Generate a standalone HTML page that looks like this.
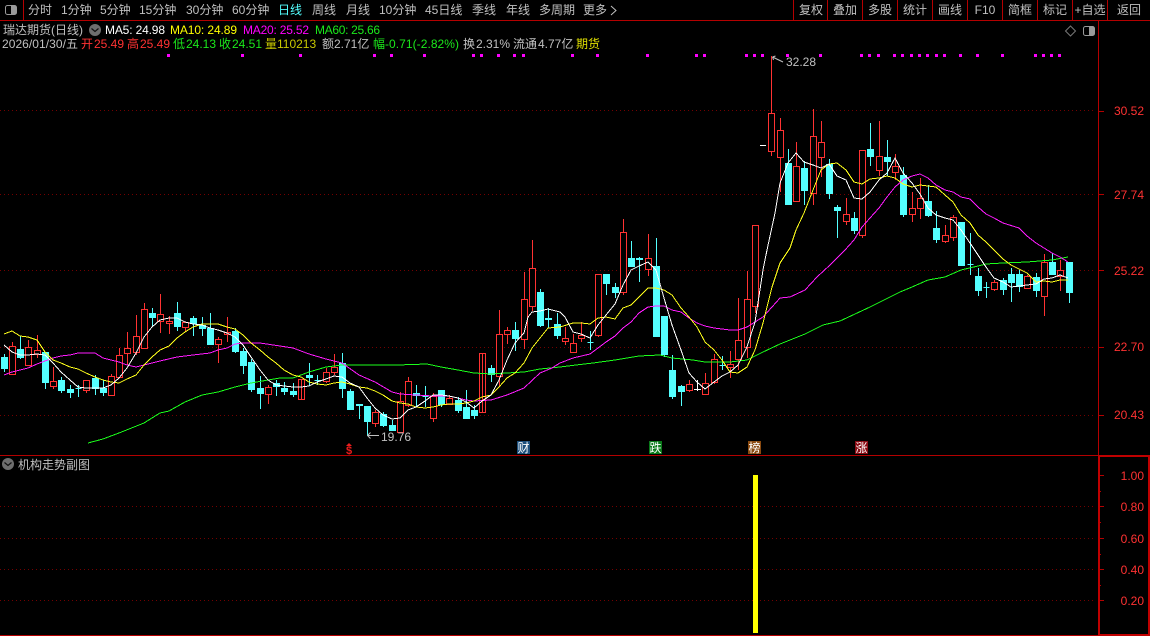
<!DOCTYPE html>
<html><head><meta charset="utf-8"><style>
html,body{margin:0;padding:0;background:#000;width:1150px;height:636px;overflow:hidden}
svg{display:block}
text{font-family:"Liberation Sans","WenQuanYi Zen Hei","Noto Sans CJK SC",sans-serif;font-size:12px;fill:#c0c0c0}
.r{fill:#ff3232}.g{fill:#1be81b}.y{fill:#c8c800}
.a{fill:#ff3232;text-anchor:end}.m{text-anchor:middle}
</style></head><body>
<svg width="1150" height="636" viewBox="0 0 1150 636" xmlns="http://www.w3.org/2000/svg">
<rect width="1150" height="636" fill="#000"/>
<!-- grid -->
<g stroke="#740000" stroke-width="1" stroke-dasharray="1 3" shape-rendering="crispEdges">
<path d="M0 110.500H1094M0 194.500H1094M0 270.500H1094M0 347.500H1094M0 415.500H1094M0 506.500H1094M0 538.500H1094M0 569.500H1094M0 600.500H1094"/>
</g>
<!-- frame -->
<g stroke="#b40000" stroke-width="1" fill="none" shape-rendering="crispEdges">
<path d="M0 20.500H1150M0 455.500H1098M23.500 0V20M793.500 0V20M827.500 0V20M862.500 0V20M897.500 0V20M932.500 0V20M967.500 0V20M1002.500 0V20M1037.500 0V20M1072.500 0V20M1107.500 0V20M1098.500 20V455M0 635.500H1098"/>
<path d="M1098 111.500H1104M1098 194.500H1104M1098 270.500H1104M1098 347.500H1104M1098 415.500H1104M1098 475.500H1104M1098 506.500H1104M1098 538.500H1104M1098 569.500H1104M1098 600.500H1104M1098 491.500H1101M1098 522.500H1101M1098 554.500H1101M1098 585.500H1101"/>
<rect x="1099" y="456" width="50" height="179" stroke-width="2" stroke="#c00000"/>
</g>
<!-- toolbar icon -->
<rect x="5.500" y="5.500" width="11" height="9" rx="2" fill="#000" stroke="#9a9a9a"/><rect x="11" y="6" width="5" height="8" fill="#9a9a9a"/>
<!-- toolbar -->
<text x="28" y="14">分时</text><text x="61" y="14">1分钟</text><text x="100" y="14">5分钟</text><text x="139" y="14">15分钟</text><text x="186" y="14">30分钟</text><text x="232" y="14">60分钟</text>
<text x="278" y="14" style="fill:#54ffff">日线</text><text x="312" y="14">周线</text><text x="346" y="14">月线</text><text x="379" y="14">10分钟</text><text x="425" y="14">45日线</text><text x="472" y="14">季线</text><text x="506" y="14">年线</text><text x="539" y="14">多周期</text><text x="583" y="14">更多</text>
<path d="M611 6l5 4.500l-5 4.500" fill="none" stroke="#c0c0c0"/>
<text class="m" x="811" y="14">复权</text><text class="m" x="845" y="14">叠加</text><text class="m" x="880" y="14">多股</text><text class="m" x="915" y="14">统计</text><text class="m" x="950" y="14">画线</text><text class="m" x="985" y="14">F10</text><text class="m" x="1020" y="14">简框</text><text class="m" x="1055" y="14">标记</text><text class="m" x="1090" y="14">+自选</text><text class="m" x="1129" y="14">返回</text>
<!-- info -->
<text x="3" y="34">瑞达期货(日线)</text>
<circle cx="95" cy="30" r="6" fill="#6e6e6e"/><path d="M91.500 28.500l3.500 3l3.500-3" fill="none" stroke="#111" stroke-width="1.200"/>
<text x="105" y="34" style="fill:#fff" textLength="60">MA5: 24.98</text><text x="170" y="34" style="fill:#ff0" textLength="67">MA10: 24.89</text><text x="243" y="34" style="fill:#f0f" textLength="66">MA20: 25.52</text><text x="315" y="34" style="fill:#1be81b" textLength="65">MA60: 25.66</text>
<text x="2" y="48" textLength="76">2026/01/30/五</text>
<text class="r" x="81" y="48">开</text><text class="r" x="94" y="48">25.49</text><text class="r" x="127" y="48">高</text><text class="r" x="140" y="48">25.49</text>
<text class="g" x="173" y="48">低</text><text class="g" x="186" y="48">24.13</text><text class="g" x="219" y="48">收</text><text class="g" x="232" y="48">24.51</text>
<text class="y" x="265" y="48">量</text><text class="y" x="277" y="48">110213</text>
<text x="322" y="48">额</text><text x="334" y="48">2.71亿</text>
<text class="g" x="373" y="48">幅</text><text class="g" x="385" y="48" textLength="74">-0.71(-2.82%)</text>
<text x="463" y="48">换</text><text x="476" y="48">2.31%</text><text x="513" y="48">流通</text><text x="538" y="48">4.77亿</text><text x="576" y="48" style="fill:#e0e000">期货</text>
<!-- top right icons -->
<path d="M1070.500 26l5 5l-5 5l-5-5z" fill="none" stroke="#777"/>
<rect x="1083.500" y="26.500" width="11" height="9" rx="2" fill="#000" stroke="#9a9a9a"/><rect x="1089" y="27" width="5" height="8" fill="#9a9a9a"/>
<!-- dots -->
<path fill="#f0f" shape-rendering="crispEdges" d="M167 54h3v3h-3zM241 54h3v3h-3zM299 54h3v3h-3zM373 54h3v3h-3zM390 54h3v3h-3zM423 54h3v3h-3zM472 54h3v3h-3zM480 54h3v3h-3zM497 54h3v3h-3zM513 54h3v3h-3zM522 54h3v3h-3zM571 54h3v3h-3zM596 54h3v3h-3zM646 54h3v3h-3zM695 54h3v3h-3zM703 54h3v3h-3zM745 54h3v3h-3zM753 54h3v3h-3zM761 54h3v3h-3zM786 54h3v3h-3zM819 54h3v3h-3zM860 54h3v3h-3zM868 54h3v3h-3zM877 54h3v3h-3zM893 54h3v3h-3zM901 54h3v3h-3zM910 54h3v3h-3zM918 54h3v3h-3zM926 54h3v3h-3zM935 54h3v3h-3zM943 54h3v3h-3zM959 54h3v3h-3zM976 54h3v3h-3zM1001 54h3v3h-3zM1034 54h3v3h-3zM1042 54h3v3h-3zM1050 54h3v3h-3zM1058 54h3v3h-3z"/>
<!-- cyan candles -->
<path fill="#54ffff" stroke="#54ffff" stroke-width="1" shape-rendering="crispEdges" d="M4.500 354V372M1.500 357.500h6V368.500h-6zM20.500 336V359M17.500 349.500h6V357.500h-6zM45.500 352V389M42.500 352.500h6V382.500h-6zM61.500 377V393M58.500 380.500h6V390.500h-6zM70.500 385V398M67.500 389.500h6V392.500h-6zM78.500 385V397M75.500 388.500h6V388.500h-6zM95.500 375V395M92.500 378.500h6V388.500h-6zM103.500 380V396M100.500 388.500h6V392.500h-6zM152.500 308V327M149.500 313.500h6V317.500h-6zM177.500 302V331M174.500 313.500h6V326.500h-6zM193.500 316V336M190.500 318.500h6V323.500h-6zM202.500 317V336M199.500 325.500h6V328.500h-6zM210.500 313V344M207.500 328.500h6V344.500h-6zM235.500 328V353M232.500 331.500h6V351.500h-6zM243.500 348V374M240.500 351.500h6V365.500h-6zM251.500 359V392M248.500 362.500h6V389.500h-6zM260.500 376V409M257.500 388.500h6V393.500h-6zM276.500 380V396M273.500 383.500h6V386.500h-6zM284.500 382V395M281.500 388.500h6V391.500h-6zM293.500 383V397M290.500 391.500h6V394.500h-6zM309.500 363V386M306.500 375.500h6V377.500h-6zM317.500 375V385M314.500 380.500h6V380.500h-6zM342.500 353V398M339.500 363.500h6V388.500h-6zM350.500 389V409M347.500 391.500h6V409.500h-6zM359.500 404V419M356.500 404.500h6V405.500h-6zM367.500 406V436M364.500 406.500h6V421.500h-6zM383.500 412V427M380.500 414.500h6V425.500h-6zM392.500 420V431M389.500 425.500h6V430.500h-6zM416.500 385V407M413.500 393.500h6V395.500h-6zM425.500 386V407M422.500 396.500h6V396.500h-6zM441.500 390V407M438.500 390.500h6V404.500h-6zM458.500 397V413M455.500 400.500h6V410.500h-6zM466.500 390V419M463.500 407.500h6V418.500h-6zM474.500 405V419M471.500 410.500h6V415.500h-6zM491.500 365V382M488.500 368.500h6V374.500h-6zM515.500 322V351M512.500 330.500h6V338.500h-6zM540.500 289V327M537.500 292.500h6V325.500h-6zM548.500 308V328M545.500 318.500h6V319.500h-6zM557.500 313V339M554.500 324.500h6V335.500h-6zM590.500 331V350M587.500 342.500h6V342.500h-6zM606.500 274V295M603.500 274.500h6V283.500h-6zM615.500 283V298M612.500 287.500h6V292.500h-6zM631.500 241V266M628.500 258.500h6V266.500h-6zM639.500 257V282M636.500 258.500h6V259.500h-6zM656.500 238V336M653.500 266.500h6V336.500h-6zM664.500 316V357M661.500 316.500h6V354.500h-6zM672.500 355V399M669.500 370.500h6V396.500h-6zM681.500 385V406M678.500 386.500h6V391.500h-6zM722.500 356V370M719.500 365.500h6V365.500h-6zM788.500 149V205M785.500 163.500h6V204.500h-6zM804.500 161V205M801.500 168.500h6V190.500h-6zM829.500 159V199M826.500 164.500h6V193.500h-6zM837.500 205V238M834.500 207.500h6V210.500h-6zM854.500 212V234M851.500 218.500h6V230.500h-6zM870.500 123V166M867.500 149.500h6V156.500h-6zM887.500 140V176M884.500 157.500h6V161.500h-6zM903.500 167V217M900.500 175.500h6V214.500h-6zM928.500 185V217M925.500 201.500h6V215.500h-6zM936.500 211V243M933.500 228.500h6V239.500h-6zM961.500 222V266M958.500 222.500h6V265.500h-6zM970.500 233V275M967.500 264.500h6V264.500h-6zM978.500 268V296M975.500 276.500h6V290.500h-6zM986.500 282V298M983.500 287.500h6V287.500h-6zM1003.500 278V295M1000.500 280.500h6V289.500h-6zM1011.500 268V302M1008.500 274.500h6V282.500h-6zM1019.500 270V292M1016.500 274.500h6V286.500h-6zM1036.500 273V297M1033.500 277.500h6V290.500h-6zM1052.500 253V275M1049.500 262.500h6V274.500h-6zM1069.500 262V303M1066.500 262.500h6V292.500h-6z"/>
<!-- red candles -->
<path fill="#000" stroke="#ff3232" stroke-width="1" shape-rendering="crispEdges" d="M12.500 342V346M9.500 346.500h6V374.500h-6zM28.500 340V347M25.500 347.500h6V365.500h-6zM37.500 335V350M37.500 354V358M34.500 350.500h6V354.500h-6zM53.500 367V381M53.500 386V389M50.500 381.500h6V386.500h-6zM86.500 390V393M83.500 380.500h6V390.500h-6zM111.500 374V376M108.500 376.500h6V395.500h-6zM119.500 348V355M116.500 355.500h6V377.500h-6zM127.500 332V348M127.500 353V365M124.500 348.500h6V353.500h-6zM136.500 315V336M136.500 352V355M133.500 336.500h6V352.500h-6zM144.500 303V309M141.500 309.500h6V348.500h-6zM160.500 294V314M160.500 321V333M157.500 314.500h6V321.500h-6zM169.500 316V321M169.500 323V334M166.500 321.500h6V323.500h-6zM185.500 327V331M182.500 322.500h6V327.500h-6zM218.500 337V339M218.500 344V363M215.500 339.500h6V344.500h-6zM227.500 317V332M227.500 334V342M224.500 332.500h6V334.500h-6zM268.500 385V387M268.500 394V404M265.500 387.500h6V394.500h-6zM301.500 379V399M298.500 379.500h6V399.500h-6zM326.500 368V372M326.500 381V383M323.500 372.500h6V381.500h-6zM334.500 354V367M334.500 372V375M331.500 367.500h6V372.500h-6zM375.500 410V412M375.500 423V427M372.500 412.500h6V423.500h-6zM400.500 392V401M397.500 401.500h6V432.500h-6zM408.500 377V381M408.500 405V407M405.500 381.500h6V405.500h-6zM433.500 393V396M433.500 418V422M430.500 396.500h6V418.500h-6zM449.500 395V398M449.500 404V405M446.500 398.500h6V404.500h-6zM482.500 353V412M479.500 353.500h6V412.500h-6zM499.500 310V334M499.500 376V387M496.500 334.500h6V376.500h-6zM507.500 327V330M507.500 334V344M504.500 330.500h6V334.500h-6zM524.500 272V299M524.500 339V349M521.500 299.500h6V339.500h-6zM532.500 240V268M532.500 306V311M529.500 268.500h6V306.500h-6zM565.500 327V338M565.500 341V345M562.500 338.500h6V341.500h-6zM573.500 334V343M570.500 343.500h6V352.500h-6zM581.500 322V335M581.500 338V342M578.500 335.500h6V338.500h-6zM598.500 335V337M595.500 274.500h6V335.500h-6zM623.500 219V232M623.500 292V295M620.500 232.500h6V292.500h-6zM648.500 234V258M648.500 269V276M645.500 258.500h6V269.500h-6zM689.500 380V384M689.500 390V392M686.500 384.500h6V390.500h-6zM705.500 373V383M705.500 394V395M702.500 383.500h6V394.500h-6zM714.500 354V359M714.500 382V384M711.500 359.500h6V382.500h-6zM730.500 351V364M730.500 367V378M727.500 364.500h6V367.500h-6zM738.500 298V340M738.500 359V370M735.500 340.500h6V359.500h-6zM747.500 271V299M747.500 347V358M744.500 299.500h6V347.500h-6zM755.500 306V313M752.500 225.500h6V306.500h-6zM771.500 56V113M771.500 151V156M768.500 113.500h6V151.500h-6zM780.500 118V130M780.500 157V192M777.500 130.500h6V157.500h-6zM796.500 142V166M793.500 166.500h6V201.500h-6zM813.500 109V136M813.500 193V205M810.500 136.500h6V193.500h-6zM821.500 121V142M821.500 157V177M818.500 142.500h6V157.500h-6zM846.500 198V214M846.500 221V225M843.500 214.500h6V221.500h-6zM862.500 235V238M859.500 150.500h6V235.500h-6zM879.500 121V156M879.500 170V176M876.500 156.500h6V170.500h-6zM895.500 154V166M895.500 172V180M892.500 166.500h6V172.500h-6zM912.500 192V208M912.500 214V222M909.500 208.500h6V214.500h-6zM920.500 178V198M920.500 208V219M917.500 198.500h6V208.500h-6zM945.500 225V235M945.500 241V243M942.500 235.500h6V241.500h-6zM953.500 215V217M953.500 237V241M950.500 217.500h6V237.500h-6zM994.500 280V282M994.500 289V291M991.500 282.500h6V289.500h-6zM1027.500 275V276M1027.500 288V289M1024.500 276.500h6V288.500h-6zM1044.500 254V262M1044.500 296V316M1041.500 262.500h6V296.500h-6zM1060.500 260V270M1060.500 276V291M1057.500 270.500h6V276.500h-6z"/>
<!-- white doji -->
<path stroke="#fff" fill="none" shape-rendering="crispEdges" d="M694 389.500H701M697.500 380V391M760 145.500H766"/>
<!-- MA lines -->
<g fill="none" stroke-width="1" stroke-linejoin="round" shape-rendering="crispEdges">
<polyline stroke="#1bff1b" points="88,443 103,439 119,433 144,423 160,413 169,411 185,402 202,395 218,392 235,387 251,383 268,380 280,378 293,378 309,372 326,367 342,365 359,365 397,365 427,364 441,367 458,370 474,373 491,374 507,373 524,372 540,369 560,367 576,365 593,363 615,360 639,356 660,355 672,358 693,360 705,362 730,362 747,360 763,352 780,344 805,334 823,325 840,321 870,307 900,292 912,287 928,280 945,277 961,270 978,266 986,264 1003,263 1027,262 1052,260 1068,257"/>
<polyline stroke="#ff1bff" points="4,375 12,372 20,370 28,368 37,364 45,361 53,358 61,356 70,355 78,353 95,353 103,358 111,360 119,362 127,365 136,367 144,365 152,363 160,361 177,357 193,355 210,353 218,350 227,348 235,344 243,343 260,343 280,346 293,348 309,354 326,359 342,363 359,375 375,382 392,392 400,394 416,395 433,396 449,396 466,400 474,401 491,400 507,395 524,388 540,373 552,368 560,363 573,358 590,354 598,348 606,342 615,336 623,328 631,322 639,313 648,307 656,306 664,306 672,310 681,312 689,318 697,323 705,326 714,328 730,330 738,330 747,327 755,322 763,317 772,307 780,298 790,297 805,290 817,277 830,265 845,250 854,240 862,227 870,218 879,208 887,197 895,187 903,180 912,176 920,174 928,178 936,185 945,190 953,192 961,197 970,199 978,207 986,214 994,218 1003,223 1019,228 1027,236 1036,243 1044,248 1052,253 1060,257 1068,262"/>
<polyline stroke="#ffff1b" points="4,334 12,331 20,336 28,337 37,340 45,352 53,360 61,363 70,367 78,369 86,373 95,377 103,380 111,382 119,383 127,379 136,375 144,365 152,357 160,350 169,346 177,338 185,332 193,327 202,324 218,324 227,327 235,329 243,335 251,343 260,350 268,357 276,363 284,370 293,375 301,377 309,382 317,384 326,385 334,383 342,382 350,384 359,387 367,388 375,391 383,395 392,401 400,403 408,404 416,407 425,408 433,407 441,405 449,404 458,404 466,403 474,401 482,397 491,395 499,387 507,378 515,373 524,363 532,348 540,338 548,328 560,327 573,323 581,323 590,324 598,318 606,317 615,319 623,308 631,305 639,297 648,288 656,288 664,290 672,295 681,308 689,317 697,327 705,342 714,350 722,360 730,372 738,373 747,367 755,350 763,323 772,287 780,263 790,248 796,230 804,213 813,190 821,170 829,164 837,163 846,170 854,182 862,184 870,179 879,178 887,176 895,178 903,184 912,187 920,185 936,187 945,195 953,202 961,215 970,223 978,235 986,242 994,250 1003,259 1011,265 1019,269 1027,273 1036,282 1044,281 1052,282 1060,280 1068,280"/>
<polyline stroke="#fff" points="4,345 12,352 20,355 28,355 37,354 45,355 53,363 61,372 70,380 78,387 86,388 103,388 111,385 119,378 127,368 136,353 144,337 152,327 160,320 169,318 177,318 185,322 193,324 202,325 210,328 218,330 227,333 235,337 243,345 251,357 260,370 268,380 276,385 293,387 301,387 309,386 317,382 326,379 334,376 342,377 350,383 359,387 367,398 375,408 383,415 392,419 400,418 408,410 416,407 425,401 433,395 441,395 449,396 458,398 466,402 474,408 482,401 491,395 499,380 507,360 515,343 524,333 528,317 532,312 540,311 548,309 560,312 565,317 573,332 581,334 590,338 598,325 606,315 615,304 623,285 631,270 639,266 648,262 656,270 664,298 672,325 681,350 689,373 697,382 705,389 714,382 722,376 730,372 738,365 747,347 755,322 763,270 767,250 775,213 780,183 788,163 796,153 804,162 813,165 821,168 829,164 837,176 846,180 854,198 862,199 870,192 879,180 887,173 895,158 903,173 912,183 920,194 928,208 936,215 945,218 953,220 961,230 970,243 978,255 986,267 994,278 1003,282 1011,287 1019,286 1027,285 1036,284 1044,279 1052,278 1060,275 1068,278"/>
</g>
<!-- high/low labels -->
<path d="M772.500 57L783 62M772.500 57l3-1M772.500 57l1 3" stroke="#c0c0c0" fill="none"/>
<text x="786" y="66">32.28</text>
<path d="M367.500 435.500H379M367.500 435.500l3-3M367.500 435.500l3 3" stroke="#c0c0c0" fill="none"/>
<text x="381" y="441">19.76</text>
<!-- markers -->
<path d="M349 443l3 3h-6z" fill="#ee1c1c"/>
<text class="m" x="349" y="454" style="fill:#ee1c1c;font-weight:bold;font-size:11px">$</text>
<rect x="517" y="441" width="13" height="13" fill="#1c4f7c"/><text class="m" x="523.500" y="452" style="fill:#fff">财</text>
<rect x="649" y="441" width="13" height="13" fill="#0a7a1a"/><text class="m" x="655.500" y="452" style="fill:#fff">跌</text>
<rect x="748" y="441" width="13" height="13" fill="#8a4a10"/><text class="m" x="754.500" y="452" style="fill:#fff">榜</text>
<rect x="855" y="441" width="13" height="13" fill="#8a0c14"/><text class="m" x="861.500" y="452" style="fill:#fff">涨</text>
<!-- axis labels -->
<text class="a" x="1144" y="115">30.52</text><text class="a" x="1144" y="199">27.74</text><text class="a" x="1144" y="275">25.22</text><text class="a" x="1144" y="351">22.70</text><text class="a" x="1144" y="419">20.43</text>
<text class="a" x="1144" y="480">1.00</text><text class="a" x="1144" y="511">0.80</text><text class="a" x="1144" y="543">0.60</text><text class="a" x="1144" y="574">0.40</text><text class="a" x="1144" y="605">0.20</text>
<!-- sub chart -->
<circle cx="8" cy="464" r="6" fill="#6e6e6e"/><path d="M4.500 462.500l3.500 3l3.500-3" fill="none" stroke="#111" stroke-width="1.200"/>
<text x="18" y="469">机构走势副图</text>
<rect x="753" y="475" width="5" height="158" fill="#ffff00"/>
</svg>
</body></html>
